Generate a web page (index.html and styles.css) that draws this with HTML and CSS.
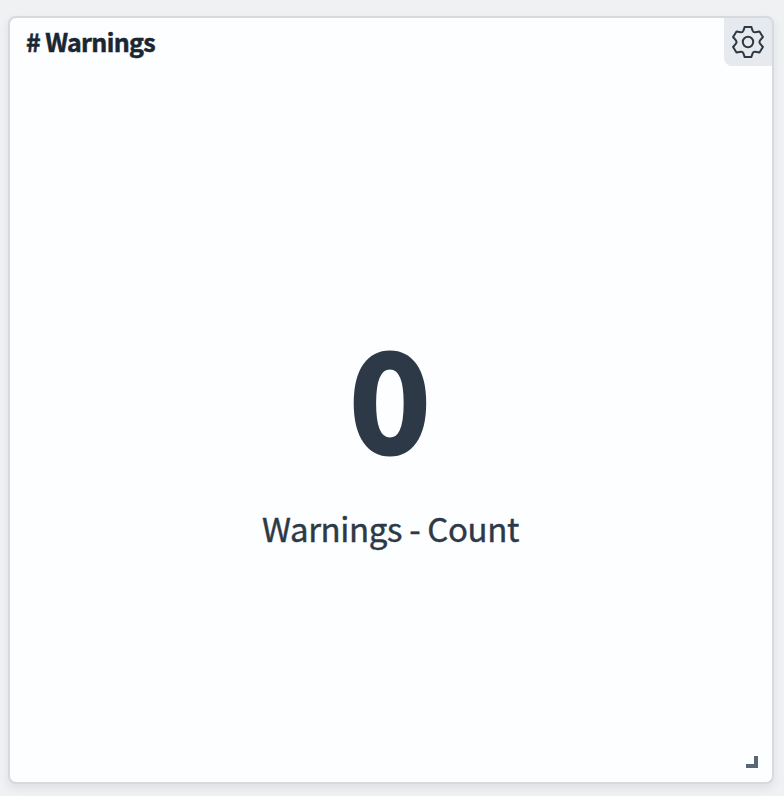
FILE: index.html
```
<!DOCTYPE html>
<html lang="en">
<head>
<meta charset="utf-8">
<title>Warnings</title>
<link rel="stylesheet" href="styles.css">
</head>
<body>
<section class="panel">
  <header class="panel-header">
    <h2 class="panel-title"># Warnings</h2>
    <button class="panel-options" aria-label="Panel options">
      <svg class="gear" viewBox="-16 -16 32 32" width="32" height="32">
        <path d="M-3.3-15.1H3.3L4.7-11.2Q5.3-9.4 7.2-9.7L11.5-10.5L14.9-5L12.1-1.7Q10.9 0 12.1 1.7L14.9 5L11.5 10.5L7.2 9.7Q5.3 9.4 4.7 11.2L3.3 15.1H-3.3L-4.7 11.2Q-5.3 9.4-7.2 9.7L-11.5 10.5L-14.9 5L-12.1 1.7Q-10.9 0-12.1-1.7L-14.9-5L-11.5-10.5L-7.2-9.7Q-5.3-9.4-4.7-11.2Z"/>
        <circle r="5.2"/>
      </svg>
    </button>
  </header>
  <div class="metric">
    <div class="metric-value">0</div>
    <div class="metric-label">Warnings - Count</div>
  </div>
  <span class="resize-handle"></span>
</section>
</body>
</html>
```
FILE: styles.css
```
* {
  box-sizing: border-box;
}

body {
  margin: 0;
  height: 796px;
  padding: 16px 10px 12px 8px;
  background: #f0f1f3;
  font-family: "Noto Sans CJK SC", "Noto Sans", sans-serif;
  overflow: hidden;
}

.panel {
  position: relative;
  display: flex;
  flex-direction: column;
  height: 768px;
  background: #fdfeff;
  border: 2px solid #d6d9dd;
  border-radius: 8px;
  box-shadow: 0 4px 8px rgba(60, 70, 90, 0.1);
  overflow: hidden;
}

.panel-header {
  display: flex;
  justify-content: space-between;
  height: 48px;
}

.panel-title {
  margin: 0;
  padding-left: 16px;
  font-size: 25px;
  line-height: 46px;
  font-weight: 700;
  letter-spacing: -0.65px;
  -webkit-text-stroke: 0.5px #1a2733;
  color: #1a2733;
}

.panel-options {
  display: flex;
  align-items: center;
  justify-content: center;
  width: 48px;
  height: 48px;
  padding: 0;
  border: 0;
  border-radius: 0 0 0 8px;
  background: #e6e9ed;
}

.gear {
  fill: none;
  stroke: #2d3947;
  stroke-width: 2;
  stroke-linejoin: round;
}

.metric {
  padding-top: 252px;
  text-align: center;
  color: #2d3947;
}

.metric-value {
  height: 150px;
  margin-left: -2px;
  font-size: 138px;
  line-height: 150px;
  font-weight: 700;
  -webkit-text-stroke: 3.2px #2d3947;
}

.metric-label {
  margin: 34px 1px 0 0;
  font-size: 33px;
  line-height: 52px;
  letter-spacing: -0.37px;
  -webkit-text-stroke: 0.4px #2d3947;
}

.resize-handle {
  position: absolute;
  right: 14px;
  bottom: 14px;
  width: 12px;
  height: 12px;
  border-right: 4px solid #5a6675;
  border-bottom: 4px solid #5a6675;
}
```
